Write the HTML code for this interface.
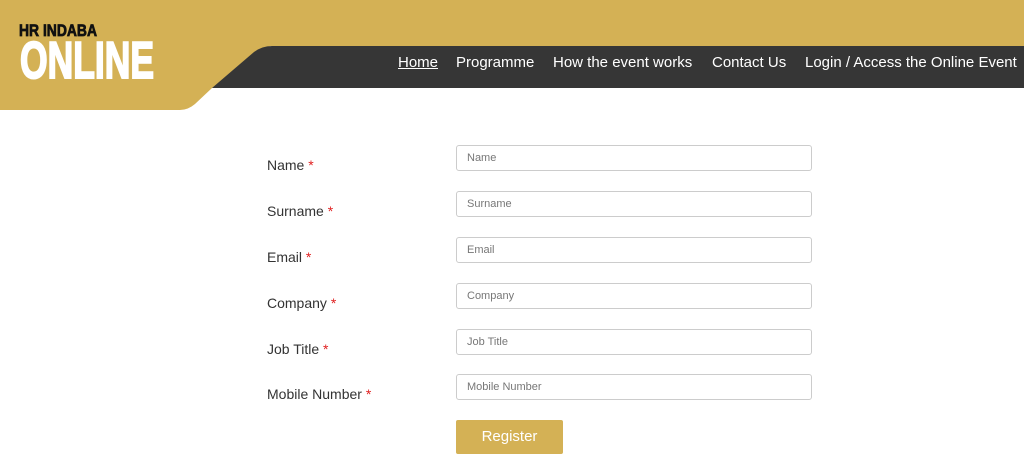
<!DOCTYPE html>
<html><head><meta charset="utf-8"><style>
body{margin:0;width:1024px;height:476px;background:#fff;font-family:"Liberation Sans",Arial,sans-serif;overflow:hidden;position:relative}
.nav{position:absolute;top:54px;font-size:15px;color:#fff}
.lbl{position:absolute;left:267px;font-size:14px;color:#333}
.lbl span{color:#e02020}
.inp{position:absolute;left:456px;border:1px solid #ccc;border-radius:3px;box-sizing:border-box;width:356px;height:26px;font-size:11px;color:#777;padding:6px 10px;line-height:12px}
.btn{position:absolute;left:456px;top:420px;width:107px;height:34px;background:#d4b155;color:#fff;font-size:15px;text-align:center;line-height:34px;border-radius:2px}
</style></head><body>
<svg width="1024" height="115" style="position:absolute;left:0;top:0">
<path d="M0 0H1024V46H270L212 88L195 104Q188 110 180 110H0Z" fill="#d4b155"/>
<path d="M1024 46H272Q262 46 254 52L212 88H1024Z" fill="#363636"/>
<text x="19" y="36" font-family="Liberation Sans" font-weight="bold" font-size="17" fill="#111" stroke="#111" stroke-width="0.8" textLength="78" lengthAdjust="spacingAndGlyphs">HR INDABA</text>
<text x="20" y="78" font-family="Liberation Sans" font-weight="bold" font-size="52" fill="#fff" stroke="#fff" stroke-width="2" textLength="134" lengthAdjust="spacingAndGlyphs">ONLINE</text>
</svg>
<div class="nav" style="left:398px;text-decoration:underline">Home</div>
<div class="nav" style="left:456px">Programme</div>
<div class="nav" style="left:553px">How the event works</div>
<div class="nav" style="left:712px">Contact Us</div>
<div class="nav" style="left:805px">Login / Access the Online Event</div>
<div class="lbl" style="top:157px">Name <span>*</span></div>
<div class="lbl" style="top:203px">Surname <span>*</span></div>
<div class="lbl" style="top:249px">Email <span>*</span></div>
<div class="lbl" style="top:295px">Company <span>*</span></div>
<div class="lbl" style="top:341px">Job Title <span>*</span></div>
<div class="lbl" style="top:386px">Mobile Number <span>*</span></div>
<div class="inp" style="top:145px">Name</div>
<div class="inp" style="top:191px">Surname</div>
<div class="inp" style="top:237px">Email</div>
<div class="inp" style="top:283px">Company</div>
<div class="inp" style="top:329px">Job Title</div>
<div class="inp" style="top:374px">Mobile Number</div>
<div class="btn">Register</div>
</body></html>
